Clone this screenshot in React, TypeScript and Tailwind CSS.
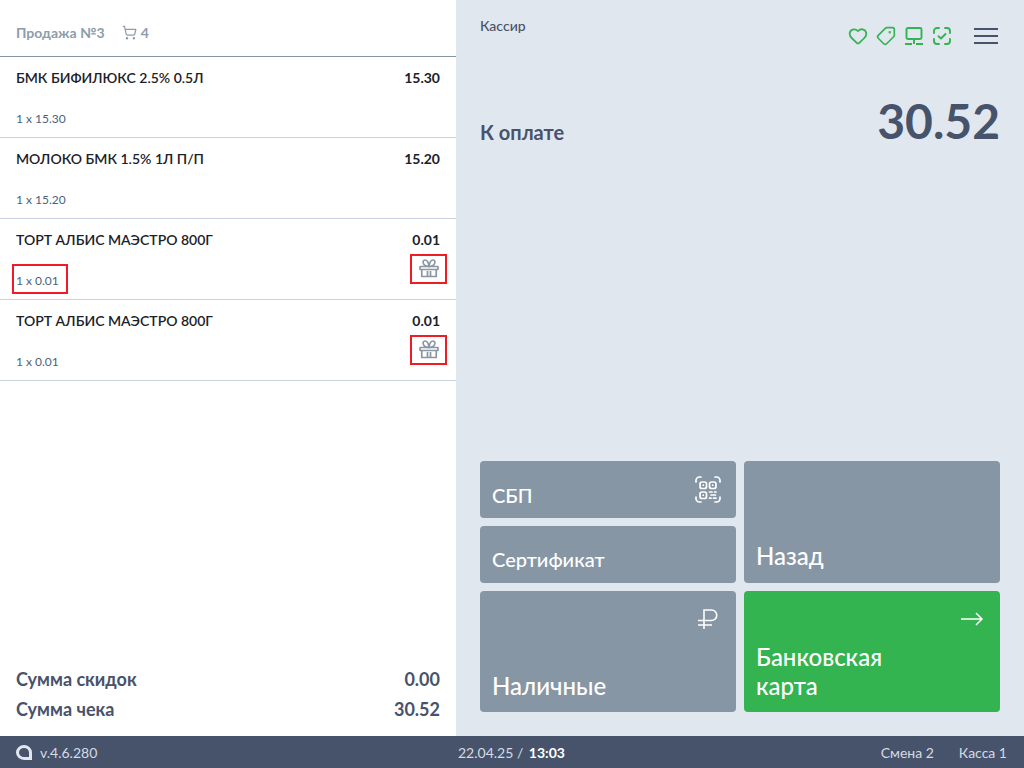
import { Heart, ShoppingCart, Tag } from 'lucide-react';

const items = [
  { name: 'БМК БИФИЛЮКС 2.5% 0.5Л', price: '15.30', qty: '1 x 15.30', gift: false, mark: false },
  { name: 'МОЛОКО БМК 1.5% 1Л П/П', price: '15.20', qty: '1 x 15.20', gift: false, mark: false },
  { name: 'ТОРТ АЛБИС МАЭСТРО 800Г', price: '0.01', qty: '1 x 0.01', gift: true, mark: true },
  { name: 'ТОРТ АЛБИС МАЭСТРО 800Г', price: '0.01', qty: '1 x 0.01', gift: true, mark: false },
];

function GiftIcon() {
  return (
    <svg width="22" height="22" viewBox="0 0 22 22" fill="none" stroke="#8a96a3" strokeWidth="1.700" strokeLinejoin="round">
      <path d="M11 8.500C10.500 4.500 9 2 7 2 5.200 2 4.800 3.800 5.300 5.200 6 7 8 8.500 11 8.500z" />
      <path d="M11 8.500C11.500 4.500 13 2 15 2 16.800 2 17.200 3.800 16.700 5.200 16 7 14 8.500 11 8.500z" />
      <rect x="2" y="8.500" width="18" height="3" rx="0.500" />
      <path d="M3.750 11.500v7h14.500v-7M9.500 13v5.500M12.500 13v5.500" />
    </svg>
  );
}

function Row({ item }: { item: (typeof items)[number] }) {
  return (
    <div className="relative h-[81px] border-b border-[#c9d3de] px-4 pt-[11px] shrink-0">
      <div className="flex justify-between text-[14px] leading-[20px] text-[#1b2128]">
        <span className="font-semibold">{item.name}</span>
        <span className="font-bold">{item.price}</span>
      </div>
      <div className="absolute left-4 top-[53px] text-[12px] leading-[18px] text-[#4d5f7d]">{item.qty}</div>
      {item.mark && (
        <div className="absolute left-[12px] top-[45px] w-[56px] h-[30px] border-2 border-[#f01c24]" />
      )}
      {item.gift && (
        <div className="absolute left-[410px] top-[35px] w-[37px] h-[30px] border-2 border-[#f01c24] flex items-center justify-center">
          <GiftIcon />
        </div>
      )}
    </div>
  );
}

function QrIcon() {
  return (
    <svg width="28" height="28" viewBox="0 0 28 28" fill="none" stroke="white" strokeWidth="1.700" strokeLinecap="round">
      <path d="M2 7V5.500A3.500 3.500 0 0 1 5.500 2H7M21 2h1.500A3.500 3.500 0 0 1 26 5.500V7M2 22v1.500A3.500 3.500 0 0 0 5.500 27H7M26 22v1.500a3.500 3.500 0 0 1-3.500 3.500H21" />
      <rect x="6" y="7" width="6.500" height="6.500" rx="2" />
      <rect x="15.500" y="7" width="6.500" height="6.500" rx="2" />
      <rect x="6" y="17" width="6.500" height="6.500" rx="2" />
      <path d="M9.200 10.200h.1M18.700 10.200h.1M9.200 20.200h.1" />
      <path d="M15.500 17h2.500M20.500 17H22M17 20h4.500M15.500 23.200h1.500M19.500 23.200H22" />
    </svg>
  );
}

function ScanCheck() {
  return (
    <svg width="18" height="18" viewBox="0 0 18 18" fill="none" stroke="#34b351" strokeWidth="1.900" strokeLinecap="round" strokeLinejoin="round">
      <path d="M6 1H4a3 3 0 0 0-3 3v2M12 1h2a3 3 0 0 1 3 3v2M1 12v2a3 3 0 0 0 3 3h2M17 12v2a3 3 0 0 1-3 3h-2" />
      <path d="M5.500 9.200l2.500 2.300 4.500-4.500" />
    </svg>
  );
}

function Monitor() {
  return (
    <svg width="18" height="18" viewBox="0 0 18 18" fill="none" stroke="#34b351" strokeWidth="1.900" strokeLinejoin="round">
      <rect x="1.500" y="1" width="15" height="11" rx="1.500" />
      <path d="M9 12v5M0 17h7M11 17h7" />
    </svg>
  );
}

function Burger() {
  return (
    <svg width="24" height="16" viewBox="0 0 24 16" fill="none" stroke="#47536b" strokeWidth="2">
      <path d="M0 1h24M0 8h24M0 15h24" />
    </svg>
  );
}

function Ruble() {
  return (
    <svg width="20" height="20" viewBox="0 0 20 20" fill="none" stroke="white" strokeWidth="1.600">
      <path d="M6 20V1h7.500a5 5 0 0 1 0 10.500H0M0 16h14" />
    </svg>
  );
}

function Arrow() {
  return (
    <svg width="22" height="14" viewBox="0 0 22 14" fill="none" stroke="white" strokeWidth="1.500">
      <path d="M0 7h21M15 1l6 6-6 6" />
    </svg>
  );
}

export default function App() {
  return (
    <div className="w-[1024px] h-[768px] flex flex-col overflow-hidden font-['Lato',sans-serif]">
      <div className="flex flex-1 min-h-0">
        <div className="w-[456px] bg-white flex flex-col">
          <div className="h-[57px] border-b border-[#8595a5] px-4 flex items-center gap-[17px] text-[14px] font-bold text-[#8d9cab] shrink-0 pb-[2px] pt-[10px]">
            <span>Продажа №3</span>
            <span className="flex items-center gap-[4px]">
              <ShoppingCart size={15} strokeWidth={2} />
              4
            </span>
          </div>
          {items.map((item, i) => (
            <Row key={i} item={item} />
          ))}
          <div className="mt-auto px-4 pb-[12px] text-[18px] font-bold text-[#47536b] leading-[30px]">
            <div className="flex justify-between">
              <span>Сумма скидок</span>
              <span>0.00</span>
            </div>
            <div className="flex justify-between">
              <span>Сумма чека</span>
              <span>30.52</span>
            </div>
          </div>
        </div>

        <div className="flex-1 bg-[#e1e7ef] px-6 pt-[17px] pb-6 flex flex-col">
          <div className="h-[44px] flex justify-between items-start">
            <span className="text-[14px] leading-[18px] font-medium text-[#47536b]">Кассир</span>
            <div className="flex items-center gap-[10px] pt-[10px] pr-[2px]">
              <div className="w-[18px] h-[18px] flex items-center justify-center">
                <Heart size={20} strokeWidth={2.100} className="shrink-0 text-[#34b351]" />
              </div>
              <div className="w-[18px] h-[18px] flex items-center justify-center">
                <Tag size={20} strokeWidth={2} className="shrink-0 text-[#34b351] rotate-90" />
              </div>
              <Monitor />
              <ScanCheck />
              <div className="ml-[13px]">
                <Burger />
              </div>
            </div>
          </div>
          <div className="flex justify-between items-end mt-[30px]">
            <span className="text-[20px] leading-[28px] font-bold text-[#47536b] pb-[5px]">К оплате</span>
            <span className="text-[48px] leading-[60px] font-bold text-[#47536b]">30.52</span>
          </div>
          <div className="mt-auto grid grid-cols-2 gap-2 grid-rows-[57px_57px_121px] text-white">
            <div className="relative rounded bg-[#8796a5] px-3 flex items-end pb-[9px] text-[20px] font-medium leading-[28px]">
              СБП
              <div className="absolute right-[14px] top-[14px]"><QrIcon /></div>
            </div>
            <div className="row-span-2 rounded bg-[#8796a5] px-3 flex items-end pb-[11px] text-[24px] font-medium leading-[32px]">
              Назад
            </div>
            <div className="rounded bg-[#8796a5] px-3 flex items-end pb-[10px] text-[20px] font-medium leading-[28px]">
              Сертификат
            </div>
            <div className="relative rounded bg-[#8796a5] px-3 flex items-end pb-[10px] text-[24px] font-medium leading-[32px]">
              Наличные
              <div className="absolute right-[18px] top-[18px]"><Ruble /></div>
            </div>
            <div className="relative rounded bg-[#34b351] px-3 flex items-end pb-[12px] text-[24px] font-medium leading-[29px]">
              <span>Банковская<br />карта</span>
              <div className="absolute right-[17px] top-[21px]"><Arrow /></div>
            </div>
          </div>
        </div>
      </div>

      <div className="h-8 bg-[#47536b] flex items-center px-4 text-[14px] text-[#d3dbe5] relative shrink-0">
        <svg width="16" height="15" viewBox="0 0 16 15" fill="none" stroke="#e1e7ef" strokeWidth="3">
          <path d="M8 1.500a6.500 6 0 1 0 0 12h6.500V7.500a6.500 6 0 0 0-6.500-6z" />
        </svg>
        <span className="ml-2">v.4.6.280</span>
        <span className="absolute left-[458px]">
          22.04.25 / <b className="ml-[2px] font-bold text-white">13:03</b>
        </span>
        <span className="ml-auto">Смена 2</span>
        <span className="ml-[25px] mr-[1px]">Касса 1</span>
      </div>
    </div>
  );
}
